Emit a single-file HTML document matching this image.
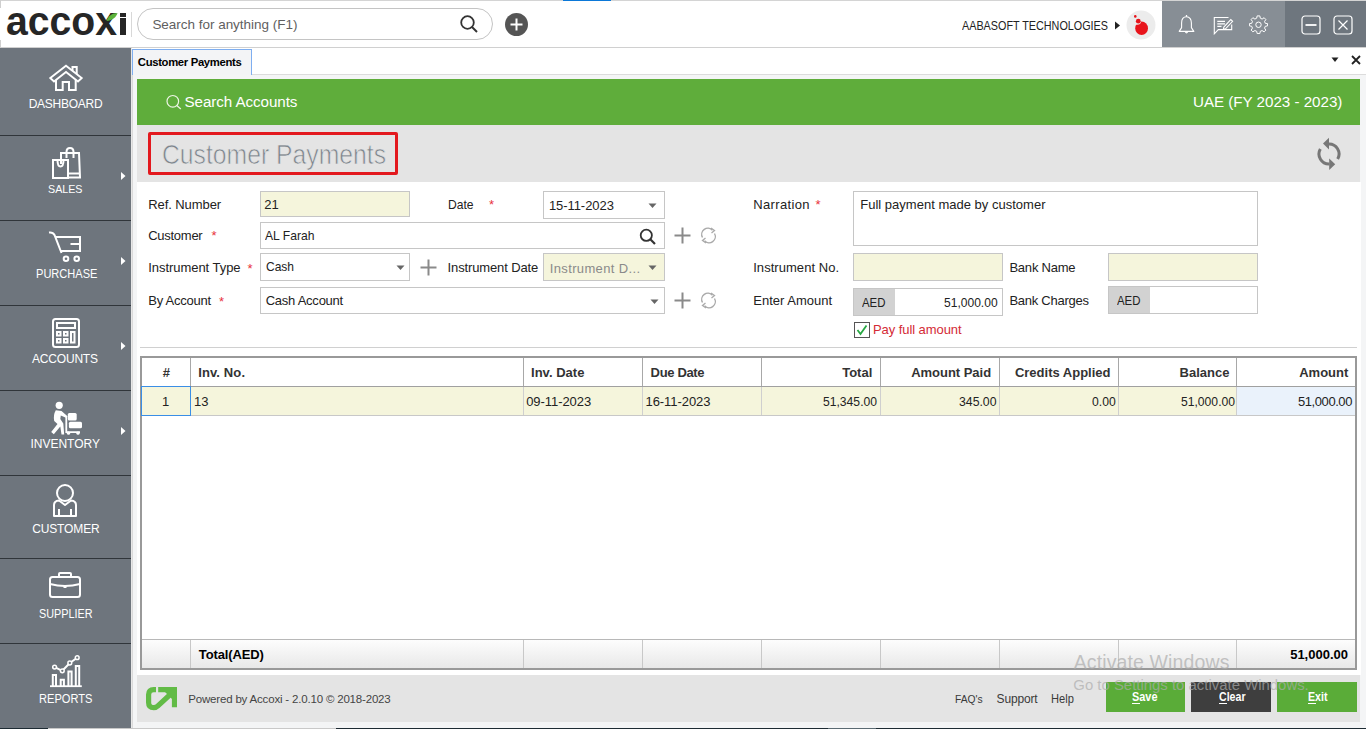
<!DOCTYPE html>
<html><head><meta charset="utf-8"><style>
html,body{margin:0;padding:0;width:1366px;height:729px;overflow:hidden;background:#fff;}
body{position:relative;font-family:"Liberation Sans",sans-serif;}
body>div,body>svg{position:absolute;}
</style></head><body>
<div style="left:0px;top:0px;width:1366px;height:48px;background:#fff;"></div>
<div style="left:0px;top:0px;width:1366px;height:1px;background:#d4d4d4;"></div>
<div style="left:563px;top:0px;width:48px;height:1px;background:#0b78d8;"></div>
<div style="left:0px;top:47px;width:1366px;height:1px;background:#d0d0d0;"></div>
<div style="left:5.50px;top:1px;font-size:41px;line-height:41px;color:#262626;white-space:pre;font-weight:bold;transform:scaleX(0.9548);transform-origin:0 0;">accox</div>
<div style="left:120px;top:13px;width:5.5px;height:22px;background:#262626;"></div>
<div style="left:119px;top:17px;width:7px;height:1.3px;background:#fff;"></div>
<div style="left:0px;top:0px;width:1px;height:8px;background:#cfcfcf;"></div>
<div style="left:0px;top:40px;width:1px;height:8px;background:#cfcfcf;"></div>
<svg style="left:105px;top:12px" width="14" height="10" viewBox="0 0 14 10"><path d="M1.5 9 C3 4 7 1 12.5 1 C11.5 5 7.5 8.5 1.5 9Z" fill="#5cb33a"/></svg>
<div style="left:131px;top:12px;width:1px;height:25px;background:#d8d8d8;"></div>
<div style="left:137px;top:8px;width:356px;height:32px;border:1px solid #c4c4c4;border-radius:16px;box-sizing:border-box;"></div>
<div style="left:152.40px;top:18px;font-size:13.5px;line-height:13.5px;color:#5f5f5f;white-space:pre;letter-spacing:-0.025px;">Search for anything (F1)</div>
<svg style="left:459px;top:14px" width="20" height="20" viewBox="0 0 20 20"><circle cx="8.5" cy="8.5" r="6.3" fill="none" stroke="#333" stroke-width="1.8"/><path d="M13 13 L18 18" stroke="#333" stroke-width="2"/></svg>
<svg style="left:504px;top:12px" width="25" height="25" viewBox="0 0 25 25"><circle cx="12.5" cy="12.5" r="11.5" fill="#555"/><path d="M12.5 6.5V18.5M6.5 12.5H18.5" stroke="#fff" stroke-width="2"/></svg>
<div style="left:962.30px;top:20px;font-size:12px;line-height:12px;color:#222;white-space:pre;transform:scaleX(0.8997);transform-origin:0 0;">AABASOFT TECHNOLOGIES</div>
<svg style="left:1114px;top:21px" width="8" height="9" viewBox="0 0 8 9"><path d="M1 0.5 L6 4.5 L1 8.5Z" fill="#222"/></svg>
<svg style="left:1126px;top:10px" width="30" height="30" viewBox="0 0 30 30"><circle cx="15" cy="15" r="14.5" fill="#ececec"/><ellipse cx="15.6" cy="18.3" rx="6.4" ry="6.8" fill="#e8141b"/><circle cx="11.2" cy="10.8" r="4" fill="#ececec"/><circle cx="12.3" cy="11.2" r="2.4" fill="#e8141b"/><circle cx="9.3" cy="6.4" r="1.3" fill="#e8141b"/></svg>
<div style="left:1162px;top:1px;width:123px;height:46px;background:#878e95;"></div>
<div style="left:1285px;top:1px;width:81px;height:46px;background:#6e767e;"></div>
<svg style="left:1178px;top:14px" width="18" height="21" viewBox="0 0 18 21"><path d="M8.5 2.8 C5.2 2.8 3.6 5.6 3.6 9 V13.6 L1.2 17.4 H15.8 L13.4 13.6 V9 C13.4 5.6 11.8 2.8 8.5 2.8Z" fill="none" stroke="#fff" stroke-width="1.1" stroke-linejoin="round"/><path d="M7.2 17.6 Q8.5 20.2 9.8 17.6" fill="none" stroke="#fff" stroke-width="1.1"/><path d="M8.5 1 V2.8" stroke="#fff" stroke-width="1.3"/></svg>
<svg style="left:1213px;top:16px" width="21" height="19" viewBox="0 0 21 19"><path d="M15.5 1.5 H1.3 V17.8 L5.3 13.6 H18.7 V8.5" fill="none" stroke="#fff" stroke-width="1.1"/><path d="M4.3 5.3 H12 M4.3 7.8 H12 M4.3 10.3 H8.5" stroke="#fff" stroke-width="1.3"/><path d="M10.8 11.2 L17.8 3.6 L19.6 5.3 L12.5 12.8 L10.4 13.3Z" fill="none" stroke="#fff" stroke-width="1.1"/></svg>
<svg style="left:1249px;top:15px" width="19" height="19" viewBox="0 0 21 21"><path d="M9 1 H12 L12.5 3.5 L14.5 4.5 L16.7 3 L18.6 5 L17.2 7.2 L18 9.2 L20.5 9.5 V12 L18 12.5 L17.2 14.5 L18.6 16.7 L16.7 18.6 L14.5 17.2 L12.5 18 L12 20.5 H9 L8.5 18 L6.5 17.2 L4.3 18.6 L2.4 16.7 L3.8 14.5 L3 12.5 L0.5 12 V9.5 L3 9.2 L3.8 7.2 L2.4 5 L4.3 3 L6.5 4.5 L8.5 3.5Z" fill="none" stroke="#fff" stroke-width="1.1" stroke-linejoin="round"/><circle cx="10.5" cy="10.8" r="3" fill="none" stroke="#fff" stroke-width="1.1"/></svg>
<svg style="left:1301px;top:15px" width="20" height="20" viewBox="0 0 20 20"><rect x="1" y="1" width="18" height="18" rx="3" fill="none" stroke="#fff" stroke-width="1.2"/><path d="M4.5 10 H15.5" stroke="#fff" stroke-width="1.8"/></svg>
<svg style="left:1333px;top:15px" width="20" height="20" viewBox="0 0 20 20"><rect x="1" y="1" width="18" height="18" rx="3" fill="none" stroke="#fff" stroke-width="1.2"/><path d="M5.5 5.5 L14.5 14.5 M14.5 5.5 L5.5 14.5" stroke="#fff" stroke-width="1.2"/></svg>
<div style="left:0px;top:48px;width:131px;height:681px;background:#6e757d;"></div>
<div style="left:0px;top:135px;width:131px;height:1px;background:#30353a;"></div>
<div style="left:0px;top:220px;width:131px;height:1px;background:#30353a;"></div>
<div style="left:0px;top:305px;width:131px;height:1px;background:#30353a;"></div>
<div style="left:0px;top:390px;width:131px;height:1px;background:#30353a;"></div>
<div style="left:0px;top:475px;width:131px;height:1px;background:#30353a;"></div>
<div style="left:0px;top:558px;width:131px;height:1px;background:#30353a;"></div>
<div style="left:0px;top:643px;width:131px;height:1px;background:#30353a;"></div>
<div style="left:131px;top:48px;width:1px;height:681px;background:#e8e8e8;"></div>
<div style="left:28.70px;top:98px;font-size:12px;line-height:12px;color:#fff;white-space:pre;letter-spacing:-0.252px;">DASHBOARD</div>
<div style="left:48.00px;top:184px;font-size:11.5px;line-height:11.5px;color:#fff;white-space:pre;transform:scaleX(0.9304);transform-origin:0 0;">SALES</div>
<div style="left:35.50px;top:268px;font-size:12px;line-height:12px;color:#fff;white-space:pre;transform:scaleX(0.9223);transform-origin:0 0;">PURCHASE</div>
<div style="left:32.00px;top:353px;font-size:12px;line-height:12px;color:#fff;white-space:pre;letter-spacing:-0.191px;">ACCOUNTS</div>
<div style="left:30.50px;top:438px;font-size:12px;line-height:12px;color:#fff;white-space:pre;letter-spacing:-0.010px;">INVENTORY</div>
<div style="left:32.20px;top:523px;font-size:12px;line-height:12px;color:#fff;white-space:pre;letter-spacing:-0.136px;">CUSTOMER</div>
<div style="left:39.00px;top:608px;font-size:12px;line-height:12px;color:#fff;white-space:pre;transform:scaleX(0.9030);transform-origin:0 0;">SUPPLIER</div>
<div style="left:39.30px;top:693px;font-size:12px;line-height:12px;color:#fff;white-space:pre;transform:scaleX(0.9257);transform-origin:0 0;">REPORTS</div>
<svg style="left:120px;top:171px" width="7" height="10" viewBox="0 0 7 10"><path d="M1 1 L5.5 5 L1 9Z" fill="#fff"/></svg>
<svg style="left:120px;top:256px" width="7" height="10" viewBox="0 0 7 10"><path d="M1 1 L5.5 5 L1 9Z" fill="#fff"/></svg>
<svg style="left:120px;top:341px" width="7" height="10" viewBox="0 0 7 10"><path d="M1 1 L5.5 5 L1 9Z" fill="#fff"/></svg>
<svg style="left:120px;top:426px" width="7" height="10" viewBox="0 0 7 10"><path d="M1 1 L5.5 5 L1 9Z" fill="#fff"/></svg>
<svg style="left:48px;top:63px" width="36" height="30" viewBox="0 0 36 30"><path d="M24.5 9 V4 H28.7 V12" fill="none" stroke="#fff" stroke-width="2" stroke-width="1.8"/><path d="M2.3 15 L18 2.8 L33.7 15 L30 18.5 L18 9 L6 18.5 Z" fill="#6e757d" stroke="#fff" stroke-width="1.9" stroke-linejoin="miter"/><path d="M8 17 V27 H14.7 V19 H21 V27 H27.7 V17" fill="none" stroke="#fff" stroke-width="2" stroke-width="2"/></svg>
<svg style="left:50px;top:145px" width="32" height="36" viewBox="0 0 32 36"><path d="M11 19 V8 H29 L30 32.5 H19" fill="none" stroke="#fff" stroke-width="2"/><path d="M16.5 13 V7 Q16.5 3 20 3 Q23.5 3 23.5 7 V13" fill="none" stroke="#fff" stroke-width="2"/><path d="M3 15 H18 V33 H3Z" fill="none" stroke="#fff" stroke-width="2"/><path d="M7.5 15 Q7.5 21.5 10.5 21.5 Q13.5 21.5 13.5 15" fill="none" stroke="#fff" stroke-width="2"/><path d="M18 28.5 H30" fill="none" stroke="#fff" stroke-width="2"/></svg>
<svg style="left:47px;top:229px" width="36" height="36" viewBox="0 0 36 36"><path d="M2 3.5 Q6 3 7.5 6 L14.5 24" fill="none" stroke="#fff" stroke-width="2"/><path d="M9 8 H33 V22 H13.5" fill="none" stroke="#fff" stroke-width="2"/><path d="M23.5 15 H33" fill="none" stroke="#fff" stroke-width="2"/><circle cx="19" cy="29.8" r="2.3" fill="none" stroke="#fff" stroke-width="2"/><circle cx="29.7" cy="29.8" r="2.3" fill="none" stroke="#fff" stroke-width="2"/></svg>
<svg style="left:51px;top:317px" width="30" height="32" viewBox="0 0 30 32"><rect x="2" y="2" width="26" height="28" rx="2.5" fill="none" stroke="#fff" stroke-width="2"/><rect x="6" y="6" width="18" height="5" fill="none" stroke="#fff" stroke-width="2" stroke-width="1.6"/><rect x="6" y="15" width="3.5" height="3.5" fill="none" stroke="#fff" stroke-width="2" stroke-width="1.5"/><rect x="13" y="15" width="3.5" height="3.5" fill="none" stroke="#fff" stroke-width="2" stroke-width="1.5"/><rect x="6" y="22" width="3.5" height="3.5" fill="none" stroke="#fff" stroke-width="2" stroke-width="1.5"/><rect x="13" y="22" width="3.5" height="3.5" fill="none" stroke="#fff" stroke-width="2" stroke-width="1.5"/><rect x="20" y="15" width="3.5" height="10.5" fill="none" stroke="#fff" stroke-width="2" stroke-width="1.5"/></svg>
<svg style="left:48px;top:400px" width="36" height="36" viewBox="0 0 36 36"><circle cx="11.2" cy="5.3" r="3.6" fill="#fff"/><path d="M7.8 10.2 Q5 15 6.2 21 L9.5 24 L3.2 32 L5.8 34.2 L12.3 26.5 L13.5 34.5 H16.2 L15.3 23.5 L12.3 19 L12.8 15.5 L18.5 18 L19.5 16.2 L13.5 11Z" fill="#fff"/><path d="M18.3 16.5 V32.2 H32" fill="none" stroke="#fff" stroke-width="1.8"/><rect x="19.8" y="13.1" width="8.9" height="7.5" rx="1.5" fill="#fff"/><rect x="20.9" y="21.7" width="13.1" height="6.6" rx="1.5" fill="#fff"/><circle cx="20.5" cy="33.2" r="1.6" fill="#fff"/><circle cx="30" cy="33.2" r="1.6" fill="#fff"/></svg>
<svg style="left:51px;top:483px" width="28" height="36" viewBox="0 0 28 36"><circle cx="14" cy="10" r="8" fill="none" stroke="#fff" stroke-width="2"/><path d="M3 33 V22 Q3 18 8 17.5 L14 22 L20 17.5 Q25 18 25 22 V33Z" fill="none" stroke="#fff" stroke-width="2" stroke-linejoin="round"/><path d="M8 26 V33 M20 26 V33" fill="none" stroke="#fff" stroke-width="2"/></svg>
<svg style="left:47px;top:571px" width="36" height="30" viewBox="0 0 36 30"><rect x="3" y="6" width="30" height="20" rx="2.5" fill="none" stroke="#fff" stroke-width="2"/><path d="M12 6 V3 Q12 2 13 2 H23 Q24 2 24 3 V6" fill="none" stroke="#fff" stroke-width="2"/><path d="M3 13 Q18 17 33 13" fill="none" stroke="#fff" stroke-width="2"/><rect x="16.5" y="14.5" width="3" height="2.5" fill="#fff"/></svg>
<svg style="left:48px;top:653px" width="36" height="36" viewBox="0 0 36 36"><path d="M2 33.2 H33.8" stroke="#fff" stroke-width="1.8"/><path d="M4.8 33 V22.1 H8 V33 M12.7 33 V26.7 H15.9 V33 M20.4 33 V18.4 H23.6 V33 M27.8 33 V12.9 H31.2 V33" fill="none" stroke="#fff" stroke-width="2" stroke-width="1.8"/><path d="M6.6 14.1 L14.3 17.8 L21.8 10 L29.2 4.7" fill="none" stroke="#fff" stroke-width="2" stroke-width="1.5"/><circle cx="6.6" cy="14.1" r="1.9" fill="#6e757d" stroke="#fff" stroke-width="1.5"/><circle cx="14.3" cy="17.8" r="1.9" fill="#6e757d" stroke="#fff" stroke-width="1.5"/><circle cx="21.8" cy="10" r="1.9" fill="#6e757d" stroke="#fff" stroke-width="1.5"/><circle cx="29.2" cy="4.7" r="1.9" fill="#6e757d" stroke="#fff" stroke-width="1.5"/></svg>
<div style="left:132px;top:48px;width:1234px;height:681px;background:#f4f5f6;"></div>
<div style="left:132px;top:48px;width:1234px;height:27px;background:#fff;"></div>
<div style="left:132px;top:74px;width:1234px;height:1px;background:#dcdcdc;"></div>
<div style="left:132px;top:75px;width:1px;height:654px;background:#dadada;"></div>
<div style="left:132px;top:49px;width:120px;height:26px;background:#f3f4f6;border:1px solid #7eaef0;border-bottom:none;box-sizing:border-box;"></div>
<div style="left:137.80px;top:57px;font-size:11.3px;line-height:11.3px;color:#000;white-space:pre;font-weight:bold;letter-spacing:-0.330px;">Customer Payments</div>
<svg style="left:1330px;top:56px" width="10" height="8" viewBox="0 0 10 8"><path d="M1.5 1.5 H8.5 L5 6Z" fill="#222"/></svg>
<svg style="left:1350px;top:54px" width="12" height="12" viewBox="0 0 12 12"><path d="M2 2 L10 10 M10 2 L2 10" stroke="#222" stroke-width="1.8"/></svg>
<div style="left:137px;top:79px;width:1223px;height:46px;background:#5fad3b;"></div>
<svg style="left:165px;top:94px" width="18" height="17" viewBox="0 0 18 17"><circle cx="7.8" cy="7.3" r="5.8" fill="none" stroke="#eef5e6" stroke-width="1.2"/><path d="M11.8 11.5 L15.8 14.9" stroke="#eef5e6" stroke-width="1.3"/></svg>
<div style="left:184.50px;top:94px;font-size:15.2px;line-height:15.2px;color:#fff;white-space:pre;letter-spacing:-0.076px;">Search Accounts</div>
<div style="left:1193.00px;top:94px;font-size:15.2px;line-height:15.2px;color:#fff;white-space:pre;letter-spacing:-0.032px;">UAE (FY 2023 - 2023)</div>
<div style="left:137px;top:125px;width:1223px;height:57px;background:#e4e4e4;"></div>
<div style="left:161.60px;top:141px;font-size:28px;line-height:28px;color:#7d858c;white-space:pre;transform:scaleX(0.8831);transform-origin:0 0;-webkit-text-stroke:0.7px #e4e4e4;">Customer Payments</div>
<div style="left:148px;top:132px;width:250px;height:43px;border:3px solid #e3191e;box-sizing:border-box;border-radius:2px;"></div>
<svg style="left:1315px;top:136px" width="28" height="36" viewBox="0 0 28 36"><path d="M13.5 8 A10 10 0 0 1 22.66 23" fill="none" stroke="#777" stroke-width="3"/><path d="M14.5 28 A10 10 0 0 1 5.34 13" fill="none" stroke="#777" stroke-width="3"/><path d="M14 1.8 V13.6 L8 7.6Z" fill="#777"/><path d="M14.2 22.6 V34 L20.2 28.3Z" fill="#777"/></svg>
<div style="left:137px;top:182px;width:1224px;height:493px;background:#fff;"></div>
<div style="left:148.20px;top:198px;font-size:13px;line-height:13px;color:#222;white-space:pre;letter-spacing:-0.069px;">Ref. Number</div>
<div style="left:260px;top:191px;width:150px;height:26px;background:#f5f5dc;border:1px solid #c6c6c6;box-sizing:border-box;"></div>
<div style="left:264.20px;top:198px;font-size:13px;line-height:13px;color:#222;white-space:pre;">21</div>
<div style="left:447.70px;top:198px;font-size:13px;line-height:13px;color:#222;white-space:pre;transform:scaleX(0.9322);transform-origin:0 0;">Date</div>
<div style="left:489.00px;top:198px;font-size:13px;line-height:13px;color:#e8323c;white-space:pre;">*</div>
<div style="left:543px;top:191px;width:122px;height:28px;background:#fff;border:1px solid #c6c6c6;box-sizing:border-box;"></div>
<div style="left:548.90px;top:199px;font-size:13px;line-height:13px;color:#222;white-space:pre;letter-spacing:-0.060px;">15-11-2023</div>
<svg style="left:648px;top:203px" width="9" height="6" viewBox="0 0 9 6"><path d="M0.5 0.5 H8.5 L4.5 5Z" fill="#666"/></svg>
<div style="left:148.20px;top:229px;font-size:13px;line-height:13px;color:#222;white-space:pre;letter-spacing:-0.264px;">Customer</div>
<div style="left:211.50px;top:229px;font-size:13px;line-height:13px;color:#e8323c;white-space:pre;">*</div>
<div style="left:260px;top:222px;width:405px;height:27px;background:#fff;border:1px solid #c6c6c6;box-sizing:border-box;"></div>
<div style="left:265.00px;top:229px;font-size:13px;line-height:13px;color:#222;white-space:pre;transform:scaleX(0.9322);transform-origin:0 0;">AL Farah</div>
<svg style="left:639px;top:228px" width="18" height="18" viewBox="0 0 18 18"><circle cx="7.3" cy="7.3" r="5.6" fill="none" stroke="#333" stroke-width="1.8"/><path d="M11.3 11.3 L16 16" stroke="#333" stroke-width="2.2"/></svg>
<svg style="left:673.5px;top:226.5px" width="17" height="17" viewBox="0 0 17 17"><path d="M8.5 0.5 V16.5 M0.5 8.5 H16.5" stroke="#8a8a8a" stroke-width="2"/></svg>
<svg style="left:699.5px;top:226.5px" width="17" height="17" viewBox="0 0 17 17"><path d="M2.5 10.5 A6.2 6.2 0 0 1 12.5 3.3" fill="none" stroke="#aaa" stroke-width="1.4"/><path d="M14.5 6.5 A6.2 6.2 0 0 1 4.5 13.7" fill="none" stroke="#aaa" stroke-width="1.4"/><path d="M11 1 L14.5 3.5 L11.5 6" fill="none" stroke="#aaa" stroke-width="1.3"/><path d="M6 16 L2.5 13.5 L5.5 11" fill="none" stroke="#aaa" stroke-width="1.3"/></svg>
<div style="left:148.20px;top:261px;font-size:13px;line-height:13px;color:#222;white-space:pre;letter-spacing:-0.041px;">Instrument Type</div>
<div style="left:247.50px;top:262px;font-size:13px;line-height:13px;color:#e8323c;white-space:pre;">*</div>
<div style="left:260px;top:253px;width:150px;height:28px;background:#fff;border:1px solid #c6c6c6;box-sizing:border-box;"></div>
<div style="left:265.70px;top:260px;font-size:13px;line-height:13px;color:#222;white-space:pre;transform:scaleX(0.9226);transform-origin:0 0;">Cash</div>
<svg style="left:395.5px;top:265px" width="9" height="6" viewBox="0 0 9 6"><path d="M0.5 0.5 H8.5 L4.5 5Z" fill="#666"/></svg>
<svg style="left:419.5px;top:258.5px" width="17" height="17" viewBox="0 0 17 17"><path d="M8.5 0.5 V16.5 M0.5 8.5 H16.5" stroke="#8a8a8a" stroke-width="2"/></svg>
<div style="left:447.60px;top:261px;font-size:13px;line-height:13px;color:#222;white-space:pre;letter-spacing:-0.135px;">Instrument Date</div>
<div style="left:543px;top:253px;width:122px;height:28px;background:#f5f5dc;border:1px solid #c6c6c6;box-sizing:border-box;"></div>
<div style="left:549.80px;top:262px;font-size:13px;line-height:13px;color:#8a8a8a;white-space:pre;letter-spacing:0.354px;">Instrument D...</div>
<svg style="left:648px;top:265px" width="9" height="6" viewBox="0 0 9 6"><path d="M0.5 0.5 H8.5 L4.5 5Z" fill="#666"/></svg>
<div style="left:148.20px;top:294px;font-size:13px;line-height:13px;color:#222;white-space:pre;letter-spacing:-0.227px;">By Account</div>
<div style="left:219.00px;top:295px;font-size:13px;line-height:13px;color:#e8323c;white-space:pre;">*</div>
<div style="left:260px;top:287px;width:405px;height:27px;background:#fff;border:1px solid #c6c6c6;box-sizing:border-box;"></div>
<div style="left:265.70px;top:294px;font-size:13px;line-height:13px;color:#222;white-space:pre;letter-spacing:-0.247px;">Cash Account</div>
<svg style="left:650px;top:298.5px" width="9" height="6" viewBox="0 0 9 6"><path d="M0.5 0.5 H8.5 L4.5 5Z" fill="#666"/></svg>
<svg style="left:673.5px;top:291.5px" width="17" height="17" viewBox="0 0 17 17"><path d="M8.5 0.5 V16.5 M0.5 8.5 H16.5" stroke="#8a8a8a" stroke-width="2"/></svg>
<svg style="left:699.5px;top:291.5px" width="17" height="17" viewBox="0 0 17 17"><path d="M2.5 10.5 A6.2 6.2 0 0 1 12.5 3.3" fill="none" stroke="#aaa" stroke-width="1.4"/><path d="M14.5 6.5 A6.2 6.2 0 0 1 4.5 13.7" fill="none" stroke="#aaa" stroke-width="1.4"/><path d="M11 1 L14.5 3.5 L11.5 6" fill="none" stroke="#aaa" stroke-width="1.3"/><path d="M6 16 L2.5 13.5 L5.5 11" fill="none" stroke="#aaa" stroke-width="1.3"/></svg>
<div style="left:753.20px;top:198px;font-size:13px;line-height:13px;color:#222;white-space:pre;letter-spacing:0.354px;">Narration</div>
<div style="left:815.50px;top:198px;font-size:13px;line-height:13px;color:#e8323c;white-space:pre;">*</div>
<div style="left:853px;top:191px;width:405px;height:55px;background:#fff;border:1px solid #c6c6c6;box-sizing:border-box;"></div>
<div style="left:860.20px;top:198px;font-size:13px;line-height:13px;color:#222;white-space:pre;letter-spacing:0.012px;">Full payment made by customer</div>
<div style="left:753.20px;top:261px;font-size:13px;line-height:13px;color:#222;white-space:pre;letter-spacing:0.049px;">Instrument No.</div>
<div style="left:853px;top:253px;width:150px;height:28px;background:#f5f5dc;border:1px solid #c6c6c6;box-sizing:border-box;"></div>
<div style="left:1009.40px;top:261px;font-size:13px;line-height:13px;color:#222;white-space:pre;letter-spacing:-0.215px;">Bank Name</div>
<div style="left:1108px;top:253px;width:150px;height:28px;background:#f5f5dc;border:1px solid #c6c6c6;box-sizing:border-box;"></div>
<div style="left:753.20px;top:294px;font-size:13px;line-height:13px;color:#222;white-space:pre;letter-spacing:0.021px;">Enter Amount</div>
<div style="left:853px;top:288px;width:150px;height:28px;background:#fff;border:1px solid #c6c6c6;box-sizing:border-box;"></div>
<div style="left:854px;top:289px;width:41px;height:26px;background:#d2d2d2;"></div>
<div style="left:862.30px;top:297px;font-size:12px;line-height:12px;color:#222;white-space:pre;transform:scaleX(0.9524);transform-origin:0 0;">AED</div>
<div style="left:943.70px;top:296px;font-size:13px;line-height:13px;color:#222;white-space:pre;transform:scaleX(0.9268);transform-origin:0 0;">51,000.00</div>
<div style="left:1009.40px;top:294px;font-size:13px;line-height:13px;color:#222;white-space:pre;letter-spacing:-0.262px;">Bank Charges</div>
<div style="left:1108px;top:286px;width:150px;height:28px;background:#fff;border:1px solid #c6c6c6;box-sizing:border-box;"></div>
<div style="left:1109px;top:287px;width:41px;height:26px;background:#d2d2d2;"></div>
<div style="left:1117.20px;top:295px;font-size:12px;line-height:12px;color:#222;white-space:pre;transform:scaleX(0.9524);transform-origin:0 0;">AED</div>
<div style="left:854px;top:322px;width:16px;height:16px;border:1px solid #555;box-sizing:border-box;background:#fff;"></div>
<svg style="left:855px;top:323px" width="14" height="14" viewBox="0 0 14 14"><path d="M2.5 7 L5.5 11 L11.5 2.5" fill="none" stroke="#27a843" stroke-width="1.8"/></svg>
<div style="left:873.00px;top:323px;font-size:13px;line-height:13px;color:#d42a35;white-space:pre;letter-spacing:-0.072px;">Pay full amount</div>
<div style="left:140px;top:347px;width:1217px;height:1px;background:#d0d0d0;"></div>
<div style="left:140px;top:356px;width:1217px;height:314px;border:2px solid #999;box-sizing:border-box;background:#fff;"></div>
<div style="left:190px;top:358px;width:1px;height:28px;background:#a8a8a8;"></div>
<div style="left:523px;top:358px;width:1px;height:28px;background:#a8a8a8;"></div>
<div style="left:642px;top:358px;width:1px;height:28px;background:#a8a8a8;"></div>
<div style="left:761px;top:358px;width:1px;height:28px;background:#a8a8a8;"></div>
<div style="left:880px;top:358px;width:1px;height:28px;background:#a8a8a8;"></div>
<div style="left:999px;top:358px;width:1px;height:28px;background:#a8a8a8;"></div>
<div style="left:1118px;top:358px;width:1px;height:28px;background:#a8a8a8;"></div>
<div style="left:1236px;top:358px;width:1px;height:28px;background:#a8a8a8;"></div>
<div style="left:142px;top:386px;width:1213px;height:1px;background:#a0a0a0;"></div>
<div style="left:142px;top:387px;width:1213px;height:29px;background:#f5f5dc;"></div>
<div style="left:1237px;top:387px;width:118px;height:29px;background:#eaf2fb;"></div>
<div style="left:190px;top:387px;width:1px;height:29px;background:#cfcfcf;"></div>
<div style="left:523px;top:387px;width:1px;height:29px;background:#cfcfcf;"></div>
<div style="left:642px;top:387px;width:1px;height:29px;background:#cfcfcf;"></div>
<div style="left:761px;top:387px;width:1px;height:29px;background:#cfcfcf;"></div>
<div style="left:880px;top:387px;width:1px;height:29px;background:#cfcfcf;"></div>
<div style="left:999px;top:387px;width:1px;height:29px;background:#cfcfcf;"></div>
<div style="left:1118px;top:387px;width:1px;height:29px;background:#cfcfcf;"></div>
<div style="left:1236px;top:387px;width:1px;height:29px;background:#cfcfcf;"></div>
<div style="left:142px;top:415px;width:1213px;height:1px;background:#c8c8c8;"></div>
<div style="left:141px;top:386px;width:50px;height:30px;border:1px solid #3a8ee6;box-sizing:border-box;"></div>
<div style="left:162.68px;top:366px;font-size:13px;line-height:13px;color:#333;white-space:pre;font-weight:bold;">#</div>
<div style="left:198.20px;top:366px;font-size:13px;line-height:13px;color:#333;white-space:pre;font-weight:bold;letter-spacing:0.117px;">Inv. No.</div>
<div style="left:531.00px;top:366px;font-size:13px;line-height:13px;color:#333;white-space:pre;font-weight:bold;letter-spacing:0.023px;">Inv. Date</div>
<div style="left:650.60px;top:366px;font-size:13px;line-height:13px;color:#333;white-space:pre;font-weight:bold;letter-spacing:-0.336px;">Due Date</div>
<div style="left:842.21px;top:366px;font-size:13px;line-height:13px;color:#333;white-space:pre;font-weight:bold;">Total</div>
<div style="left:911.20px;top:366px;font-size:13px;line-height:13px;color:#333;white-space:pre;font-weight:bold;letter-spacing:-0.027px;">Amount Paid</div>
<div style="left:1014.92px;top:366px;font-size:13px;line-height:13px;color:#333;white-space:pre;font-weight:bold;">Credits Applied</div>
<div style="left:1179.54px;top:366px;font-size:13px;line-height:13px;color:#333;white-space:pre;font-weight:bold;">Balance</div>
<div style="left:1299.20px;top:366px;font-size:13px;line-height:13px;color:#333;white-space:pre;font-weight:bold;">Amount</div>
<div style="left:161.88px;top:395px;font-size:13px;line-height:13px;color:#222;white-space:pre;">1</div>
<div style="left:194.10px;top:395px;font-size:13px;line-height:13px;color:#222;white-space:pre;">13</div>
<div style="left:526.20px;top:395px;font-size:13px;line-height:13px;color:#222;white-space:pre;letter-spacing:-0.060px;">09-11-2023</div>
<div style="left:645.50px;top:395px;font-size:13px;line-height:13px;color:#222;white-space:pre;letter-spacing:-0.060px;">16-11-2023</div>
<div style="left:823.20px;top:395px;font-size:13px;line-height:13px;color:#222;white-space:pre;transform:scaleX(0.9337);transform-origin:0 0;">51,345.00</div>
<div style="left:959.20px;top:395px;font-size:13px;line-height:13px;color:#222;white-space:pre;transform:scaleX(0.9431);transform-origin:0 0;">345.00</div>
<div style="left:1092.00px;top:395px;font-size:13px;line-height:13px;color:#222;white-space:pre;transform:scaleX(0.9367);transform-origin:0 0;">0.00</div>
<div style="left:1180.60px;top:395px;font-size:13px;line-height:13px;color:#222;white-space:pre;transform:scaleX(0.9337);transform-origin:0 0;">51,000.00</div>
<div style="left:1298.00px;top:395px;font-size:13px;line-height:13px;color:#222;white-space:pre;letter-spacing:-0.429px;">51,000.00</div>
<div style="left:142px;top:639px;width:1213px;height:1px;background:#b8b8b8;"></div>
<div style="left:142px;top:640px;width:1213px;height:28px;background:linear-gradient(#fdfdfd,#e8e8e8);"></div>
<div style="left:190px;top:640px;width:1px;height:28px;background:#c8c8c8;"></div>
<div style="left:523px;top:640px;width:1px;height:28px;background:#c8c8c8;"></div>
<div style="left:642px;top:640px;width:1px;height:28px;background:#c8c8c8;"></div>
<div style="left:761px;top:640px;width:1px;height:28px;background:#c8c8c8;"></div>
<div style="left:880px;top:640px;width:1px;height:28px;background:#c8c8c8;"></div>
<div style="left:999px;top:640px;width:1px;height:28px;background:#c8c8c8;"></div>
<div style="left:1118px;top:640px;width:1px;height:28px;background:#c8c8c8;"></div>
<div style="left:1236px;top:640px;width:1px;height:28px;background:#c8c8c8;"></div>
<div style="left:198.80px;top:648px;font-size:13px;line-height:13px;color:#000;white-space:pre;font-weight:bold;letter-spacing:-0.133px;">Total(AED)</div>
<div style="left:1290.17px;top:648px;font-size:13px;line-height:13px;color:#000;white-space:pre;font-weight:bold;">51,000.00</div>
<div style="left:137px;top:675px;width:1223px;height:47px;background:#e4e4e4;"></div>
<svg style="left:145px;top:686px" width="34" height="26" viewBox="0 0 34 26"><path d="M11 3.6 H8.6 Q3.6 3.6 3.6 8.6 V16.4 Q3.6 21.6 8.8 21.6 Q11.2 21.6 13.2 19.6 L28.5 5.5" fill="none" stroke="#62bb46" stroke-width="5.2"/><path d="M13.2 1.1 H32 V21.2 H26.9 V6.2 H13.2Z" fill="#62bb46"/><path d="M20 6 L27 6 L27 13Z" fill="#62bb46"/></svg>
<div style="left:188.30px;top:694px;font-size:11.5px;line-height:11.5px;color:#444;white-space:pre;letter-spacing:-0.184px;">Powered by Accoxi - 2.0.10 © 2018-2023</div>
<div style="left:955.20px;top:694px;font-size:11.5px;line-height:11.5px;color:#3a3a3a;white-space:pre;transform:scaleX(0.8949);transform-origin:0 0;">FAQ's</div>
<div style="left:996.60px;top:693px;font-size:12px;line-height:12px;color:#3a3a3a;white-space:pre;letter-spacing:-0.155px;">Support</div>
<div style="left:1051.40px;top:693px;font-size:12px;line-height:12px;color:#3a3a3a;white-space:pre;transform:scaleX(0.9279);transform-origin:0 0;">Help</div>
<div style="left:1106px;top:682px;width:79px;height:30px;background:#5aac38;"></div>
<div style="left:1132.40px;top:691px;font-size:12px;line-height:12px;color:#fff;white-space:pre;font-weight:bold;transform:scaleX(0.9099);transform-origin:0 0;">Save</div>
<div style="left:1132.4px;top:703px;width:8px;height:1px;background:#fff"></div>
<div style="left:1191px;top:682px;width:80px;height:30px;background:#3e3e3e;"></div>
<div style="left:1219.00px;top:691px;font-size:12px;line-height:12px;color:#fff;white-space:pre;font-weight:bold;transform:scaleX(0.8828);transform-origin:0 0;">Clear</div>
<div style="left:1219px;top:703px;width:8px;height:1px;background:#fff"></div>
<div style="left:1277px;top:682px;width:80px;height:30px;background:#5aac38;"></div>
<div style="left:1308.30px;top:691px;font-size:12px;line-height:12px;color:#fff;white-space:pre;font-weight:bold;transform:scaleX(0.8860);transform-origin:0 0;">Exit</div>
<div style="left:1308.3px;top:703px;width:8px;height:1px;background:#fff"></div>
<div style="left:137px;top:722px;width:1223px;height:6px;background:#f3f4f5;"></div>
<div style="left:0px;top:728px;width:1366px;height:1px;background:#1d2b33;"></div>
<div style="left:48px;top:728px;width:288px;height:1px;background:#c8c8c8;"></div>
<div style="left:828px;top:728px;width:48px;height:1px;background:#5a6a72;"></div>
<div style="left:1073.70px;top:653px;font-size:19.5px;line-height:19.5px;color:rgba(172,172,172,0.7);white-space:pre;letter-spacing:0.121px;">Activate Windows</div>
<div style="left:1073.30px;top:678px;font-size:14.9px;line-height:14.9px;color:rgba(172,172,172,0.7);white-space:pre;letter-spacing:0.012px;">Go to Settings to activate Windows.</div>
</body></html>
